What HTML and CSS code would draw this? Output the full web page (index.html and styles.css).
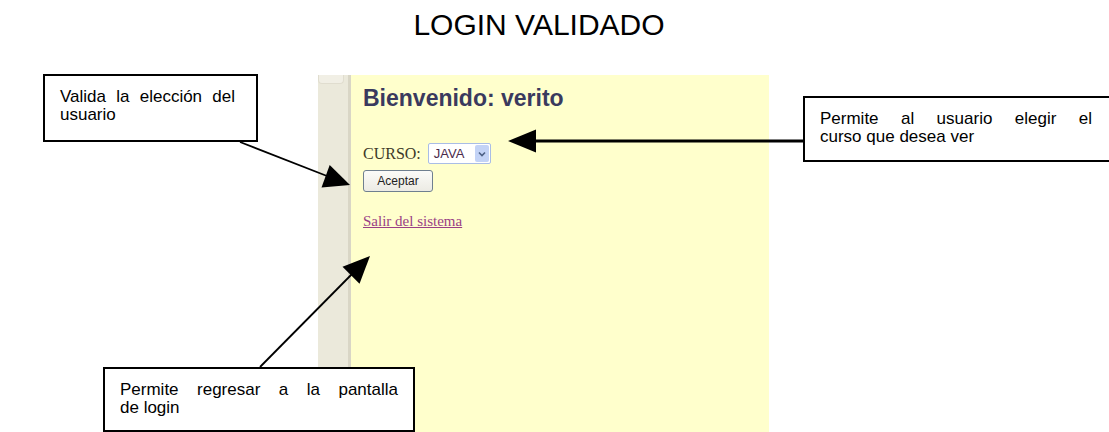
FILE: index.html
```html
<!DOCTYPE html>
<html lang="es">
<head>
<meta charset="utf-8">
<title>Login validado</title>
<link rel="stylesheet" href="styles.css">
</head>
<body>
<div class="page">
  <h1 class="title">LOGIN VALIDADO</h1>
  <div class="panel">
    <div class="strip"><div class="strip-tab"></div></div>
    <div class="content">
      <h2 class="welcome">Bienvenido: verito</h2>
      <div class="row">
        <span class="label">CURSO:</span>
        <div class="select">
          <span class="select-value">JAVA</span>
          <span class="select-drop">
            <svg width="8" height="6" viewBox="0 0 8 6"><path d="M1 1.5 L4 4.5 L7 1.5" fill="none" stroke="#4d6185" stroke-width="1.6"/></svg>
          </span>
        </div>
      </div>
      <div class="btn">Aceptar</div>
      <a class="exit" href="#">Salir del sistema</a>
    </div>
  </div>

  <div class="callout c1">
    <span class="jl">Valida la elección del</span>
    <span class="ln">usuario</span>
  </div>
  <div class="callout c2">
    <span class="jl">Permite al usuario elegir el</span>
    <span class="ln">curso que desea ver</span>
  </div>
  <div class="callout c3">
    <span class="jl">Permite regresar a la pantalla</span>
    <span class="ln">de login</span>
  </div>

  <svg class="arrows" width="1109" height="432" viewBox="0 0 1109 432">
    <line x1="240" y1="142" x2="327" y2="176" stroke="#000" stroke-width="1.8"/>
    <polygon points="350,185 321.5,187.5 329.7,164.9" fill="#000"/>
    <line x1="803" y1="141" x2="530" y2="141" stroke="#000" stroke-width="3"/>
    <polygon points="508,141 536,129.5 536,152.5" fill="#000"/>
    <line x1="260" y1="367" x2="353" y2="273" stroke="#000" stroke-width="1.8"/>
    <polygon points="370,256 359.5,283.7 342.5,266.7" fill="#000"/>
  </svg>
</div>
</body>
</html>
```

FILE: styles.css
```css
html, body {
  margin: 0;
  padding: 0;
  background: #ffffff;
}

.page {
  position: relative;
  width: 1109px;
  height: 432px;
  overflow: hidden;
  font-family: "Liberation Sans", Arial, sans-serif;
  color: #000;
}

.title {
  margin: 0;
  padding: 8px 31px 0 0;
  font-size: 30px;
  font-weight: normal;
  line-height: 34px;
  text-align: center;
}

.panel {
  display: flex;
  margin: 33px 0 0 318px;
  width: 451px;
  height: 357px;
}

.strip {
  width: 30px;
  background: #ebe9db;
  border-right: 3px solid #d9d6c6;
}

.strip-tab {
  width: 26px;
  height: 9px;
  background: #f1efe5;
  border: 1px solid #e0ddcf;
  border-top: none;
  border-radius: 0 0 4px 4px;
  box-sizing: border-box;
}

.content {
  flex: 1;
  background: #ffffcc;
  padding: 9px 0 0 12px;
}

.welcome {
  margin: 0;
  font-family: "Liberation Sans", Arial, sans-serif;
  font-size: 23px;
  font-weight: bold;
  line-height: 28px;
  color: #3a3a5e;
}

.row {
  display: flex;
  align-items: center;
  gap: 7px;
  margin-top: 31px;
}

.label {
  font-family: "Liberation Serif", "Times New Roman", serif;
  font-size: 16px;
  line-height: 17px;
  color: #3d3a28;
}

.select {
  display: flex;
  align-items: center;
  width: 63px;
  height: 21px;
  box-sizing: border-box;
  border: 1px solid #a9bde6;
  border-radius: 2px;
  background: #fff;
}

.select-value {
  flex: 1;
  padding-left: 5px;
  font-size: 13px;
  color: #4a2a4a;
}

.select-drop {
  display: flex;
  align-items: center;
  justify-content: center;
  width: 14px;
  height: 17px;
  margin-right: 1px;
  background: #c3d3f6;
  border-radius: 2px;
}

.btn {
  width: 70px;
  height: 22px;
  margin-top: 6px;
  box-sizing: border-box;
  border: 1px solid #6f7f8f;
  border-radius: 3px;
  background: linear-gradient(#fbfbf8, #ecebe4);
  font-size: 12px;
  line-height: 20px;
  text-align: center;
  color: #222;
}

.exit {
  display: inline-block;
  margin-top: 21px;
  font-family: "Liberation Serif", "Times New Roman", serif;
  font-size: 15px;
  line-height: 17px;
  color: #9a3f86;
}

.callout {
  position: absolute;
  box-sizing: border-box;
  border: 2px solid #000;
  background: #fff;
  font-size: 17px;
  line-height: 18px;
  padding-top: 12px;
}

.callout .jl {
  display: block;
  text-align: justify;
  text-align-last: justify;
}

.callout .ln {
  display: block;
}

.c1 {
  left: 43px;
  top: 74px;
  width: 215px;
  height: 68px;
  padding-left: 15px;
  padding-right: 21px;
}

.c2 {
  left: 803px;
  top: 96px;
  width: 310px;
  height: 66px;
  padding-left: 15px;
  padding-right: 19px;
}

.c3 {
  left: 103px;
  top: 367px;
  width: 312px;
  height: 65px;
  padding-left: 15px;
  padding-right: 15px;
}

.arrows {
  position: absolute;
  left: 0;
  top: 0;
  pointer-events: none;
}
```
